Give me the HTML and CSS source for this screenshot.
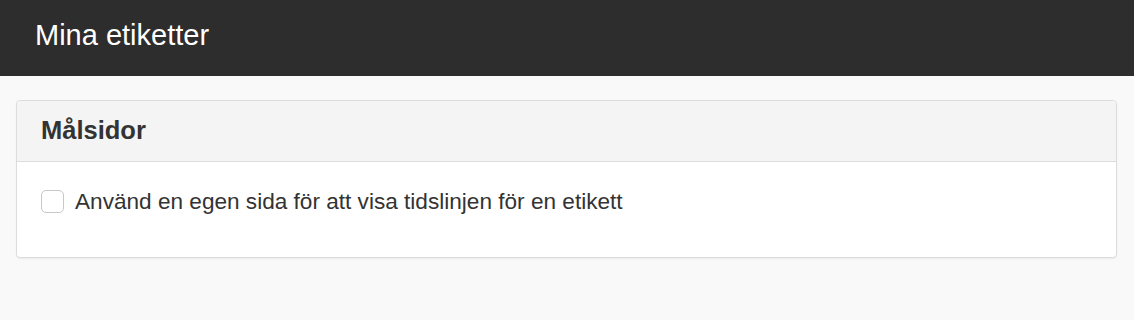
FILE: index.html
```html
<!DOCTYPE html>
<html lang="sv">
<head>
<meta charset="utf-8">
<link rel="stylesheet" href="styles.css">
</head>
<body>
<header class="topbar">
  <h1 class="title">Mina etiketter</h1>
</header>
<main class="content">
  <section class="card">
    <div class="card-head"><h2 class="card-title">Målsidor</h2></div>
    <div class="card-body">
      <label class="check-row">
        <span class="checkbox"></span>
        <span class="check-label">Använd en egen sida för att visa tidslinjen för en etikett</span>
      </label>
    </div>
  </section>
</main>
</body>
</html>
```
FILE: styles.css
```css
* { box-sizing: border-box; }
html, body { margin: 0; padding: 0; }
body {
  background: #f9f9f9;
  font-family: "Liberation Sans", Arial, sans-serif;
  color: #333;
  width: 1134px;
  height: 320px;
  overflow: hidden;
}
.topbar {
  height: 76px;
  background: #2d2d2d;
  display: flex;
  align-items: center;
  padding: 0 35px;
}
.title {
  margin: 0;
  color: #fff;
  font-weight: normal;
  font-size: 29px;
  line-height: 1;
  position: relative;
  top: -3px;
}
.content {
  padding: 24px 17px 0 16px;
}
.card {
  background: #fff;
  border: 1px solid #dcdcdc;
  border-radius: 4px;
  box-shadow: 0 1px 2px rgba(0,0,0,0.06);
  height: 158px;
  overflow: hidden;
}
.card-head {
  height: 61px;
  background: #f4f4f4;
  border-bottom: 1px solid #dcdcdc;
  display: flex;
  align-items: center;
  padding: 0 24px;
}
.card-title {
  margin: 0;
  font-size: 25.5px;
  font-weight: bold;
  color: #333;
  line-height: 1;
}
.card-body {
  padding: 27px 24px;
}
.check-row {
  display: flex;
  align-items: center;
  gap: 11px;
}
.checkbox {
  width: 23px;
  height: 23px;
  border: 1px solid #c8c8c8;
  border-radius: 5px;
  background: #fff;
  flex: none;
}
.check-label {
  font-size: 22.6px;
  color: #333;
  line-height: 24px;
  position: relative;
  top: 1px;
}
```
